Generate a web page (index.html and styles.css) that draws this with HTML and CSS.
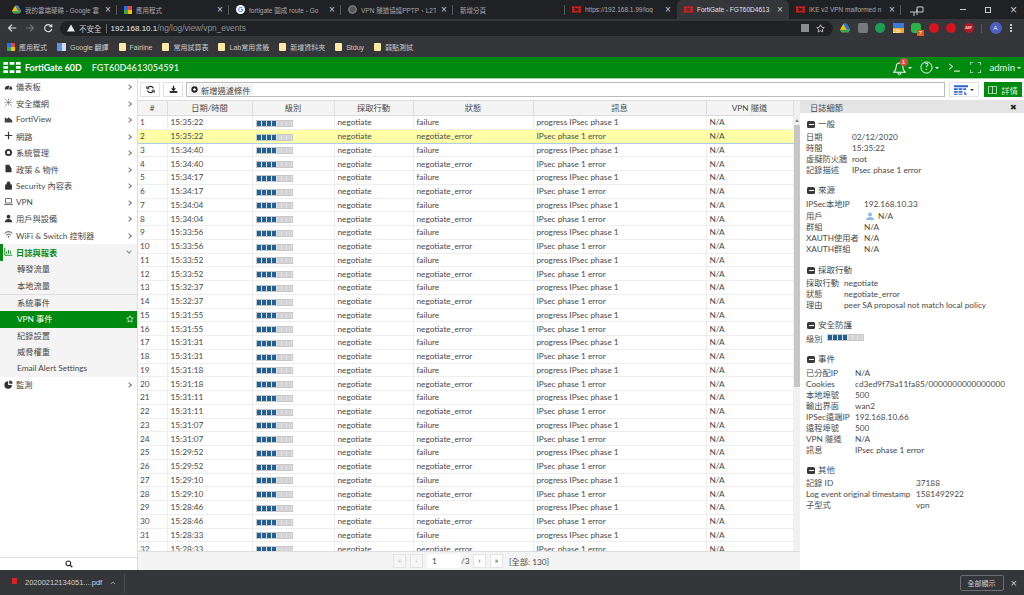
FILE: index.html
```html
<!DOCTYPE html>
<html lang="zh-Hant">
<head>
<meta charset="utf-8">
<title>FortiGate - FGT60D4613054591</title>
<link rel="stylesheet" href="styles.css">
</head>
<body>
<div class="app">
  <div class="tabs">
    <div class="tab sp"><svg class="fav" viewBox="0 0 12 12"><path d="M4 1h4l4 7-2 3H2L0 8z" fill="#fbbc04"/><path d="M4 1h4l4 7H8z" fill="#1a73e8" opacity=".8"/><path d="M0 8l2 3h8l2-3z" fill="#34a853"/></svg><span class="tt">我的雲端硬碟 - Google 雲</span><span class="x">×</span></div>
    <div class="tab sp"><span class="grid-ico"></span><span class="tt">應用程式</span><span class="x">×</span></div>
    <div class="tab sp"><span class="g-ico">G</span><span class="tt">fortigate 圖成 route - Go</span><span class="x">×</span></div>
    <div class="tab sp"><svg class="fav" viewBox="0 0 12 12"><circle cx="6" cy="6" r="5" fill="#55575a" stroke="#8a8c90" stroke-width="1.600"/></svg><span class="tt">VPN 隧道協議PPTP、L2T</span><span class="x">×</span></div>
    <div class="tab sp"><span class="tt">新增分頁</span></div>
    <div class="tab"><svg class="fav ft" viewBox="0 0 22 14"><path d="M0 0h6v3.500H0zM8 0h6v3.500H8zM16 0h6v3.500h-6zM0 5.200h6v3.500H0zM16 5.200h6v3.500h-6zM0 10.500h6V14H0zM8 10.500h6V14H8zM16 10.500h6V14h-6z"/></svg><span class="tt">https://192.168.1.99/log</span><span class="x">×</span></div>
    <div class="tab active"><svg class="fav ft" viewBox="0 0 22 14"><path d="M0 0h6v3.500H0zM8 0h6v3.500H8zM16 0h6v3.500h-6zM0 5.200h6v3.500H0zM16 5.200h6v3.500h-6zM0 10.500h6V14H0zM8 10.500h6V14H8zM16 10.500h6V14h-6z"/></svg><span class="tt">FortiGate - FGT60D4613</span><span class="x">×</span></div>
    <div class="tab sp"><svg class="fav ft" viewBox="0 0 22 14"><path d="M0 0h6v3.500H0zM8 0h6v3.500H8zM16 0h6v3.500h-6zM0 5.200h6v3.500H0zM16 5.200h6v3.500h-6zM0 10.500h6V14H0zM8 10.500h6V14H8zM16 10.500h6V14h-6z"/></svg><span class="tt">IKE v2 VPN malformed n</span><span class="x">×</span></div>
    <svg class="pin" viewBox="0 0 14 12"><path d="M0 8h7M4 8v4M7 5v6M7 3h6v5H7z" fill="none" stroke="#c8cacd" stroke-width="1"/></svg>
    <div class="win"><span class="w-min"></span><span class="w-max"></span><span class="w-x">×</span></div>
  </div>
  <div class="toolbar">
    <svg class="nav" viewBox="0 0 12 12"><path d="M11 6H2M6 2L2 6l4 4" fill="none" stroke="#dfe1e4" stroke-width="1.400"/></svg>
    <svg class="nav" viewBox="0 0 12 12"><path d="M1 6h9M6 2l4 4-4 4" fill="none" stroke="#75777b" stroke-width="1.400"/></svg>
    <svg class="nav" viewBox="0 0 12 12"><path d="M10 4a4.300 4.300 0 1 0 .5 3M10.500 1.500V4.500H7.500" fill="none" stroke="#dfe1e4" stroke-width="1.400"/></svg>
    <div class="omni">
      <svg class="warn" viewBox="0 0 10 10"><path d="M5 .5L10 9.500H0z" fill="#e8eaed"/></svg>
      <span class="insecure">不安全</span><span class="sep"></span>
      <span class="host">192.168.10.1</span><span class="path">/ng/log/view/vpn_events</span>
      <span class="omni-r"><span class="trans"></span><svg class="star" viewBox="0 0 12 12"><path d="M6 1l1.500 3.300 3.500.4-2.600 2.400.7 3.500L6 8.900l-3.100 1.700.7-3.500L1 4.700l3.500-.4z" fill="none" stroke="#dfe1e4"/></svg></span>
    </div>
    <div class="exts">
      <svg class="ext" viewBox="0 0 12 12"><path d="M4 1h4l4 7-2 3H2L0 8z" fill="#fbbc04"/><path d="M4 1h4l4 7H8z" fill="#1a73e8"/><path d="M0 8l2 3h8l2-3z" fill="#34a853"/></svg>
      <span class="ext e-gray"></span>
      <span class="ext e-green"></span>
      <span class="ext e-cal">18h</span>
      <span class="ext e-line"><span class="e-badge">7</span></span>
      <span class="ext e-red"></span>
      <span class="ext e-red"></span>
      <span class="ext e-abp">ABP</span>
      <span class="ext-sep"></span>
      <span class="avatar">A</span>
      <span class="kebab"></span>
    </div>
  </div>
  <div class="bookmarks">
    <span class="bm"><span class="grid-ico"></span>應用程式</span>
    <span class="bm"><span class="bm-tr"></span>Google 翻譯</span>
    <span class="bm"><span class="folder"></span>Fairline</span>
    <span class="bm"><span class="folder"></span>常用試算表</span>
    <span class="bm"><span class="folder"></span>Lab常用書籤</span>
    <span class="bm"><span class="folder"></span>新增資料夾</span>
    <span class="bm"><span class="folder"></span>Stduy</span>
    <span class="bm"><span class="folder"></span>弱點測試</span>
  </div>
  <header class="fg-head">
    <svg class="fg-logo" viewBox="0 0 22 14"><path d="M0 0h6v3.500H0zM8 0h6v3.500H8zM16 0h6v3.500h-6zM0 5.200h6v3.500H0zM16 5.200h6v3.500h-6zM0 10.500h6V14H0zM8 10.500h6V14H8zM16 10.500h6V14h-6z" fill="#fff"/></svg>
    <span class="fg-name">FortiGate 60D</span>
    <span class="fg-serial">FGT60D4613054591</span>
    <div class="fg-right">
      <span class="hd-bell"><svg viewBox="0 0 14 15" class="hd-ico"><path d="M7 2a3.500 3.500 0 0 0-3.500 3.500C3.500 9 2 11 1 12h12c-1-1-2.500-3-2.500-6.500A3.500 3.500 0 0 0 7 2zM5.500 13a1.500 1.500 0 0 0 3 0" fill="none" stroke="#fff" stroke-width="1.100"/></svg><span class="badge">1</span></span><span class="caret"></span>
      <svg viewBox="0 0 14 14" class="hd-help"><circle cx="7" cy="7" r="6" fill="none" stroke="#fff" stroke-width="1"/><text x="7" y="10.200" text-anchor="middle" font-size="9.500" fill="#fff" font-family="Lato">?</text></svg><span class="caret"></span>
      <svg viewBox="0 0 12 10" class="hd-term"><path d="M0 1l4 3-4 3M5.500 9H12" fill="none" stroke="#fff" stroke-width="1.100"/></svg>
      <svg viewBox="0 0 12 12" class="hd-full"><path d="M0 3.500V0h3.500M8.500 0H12v3.500M12 8.500V12H8.500M3.500 12H0V8.500" fill="none" stroke="#fff" stroke-width="1.200"/></svg>
      <span class="hd-admin">admin</span><span class="caret"></span>
    </div>
  </header>
  <main class="body">
    <nav class="side">
      <div class="side-scroll">
        <a class="nv"><svg class="ni" viewBox="0 0 12 12"><path d="M1 10a5 5 0 1 1 10 0z" fill="#333"/><path d="M6 10L8 5" stroke="#fff"/></svg><span>儀表板</span><i class="chev"></i></a>
        <a class="nv"><svg class="ni" viewBox="0 0 12 12"><path d="M1 1l10 10M11 1L1 11M6 1v10M1 6h10" stroke="#555" stroke-dasharray="1.500 1"/></svg><span>安全織網</span><i class="chev"></i></a>
        <a class="nv"><svg class="ni" viewBox="0 0 12 12"><path d="M1 10V3l3 2 2-2 5 4v3z" fill="#444"/></svg><span>FortiView</span><i class="chev"></i></a>
        <a class="nv"><svg class="ni" viewBox="0 0 12 12"><path d="M6 1v10M1 6h10" stroke="#333" stroke-width="1.600"/></svg><span>網路</span><i class="chev"></i></a>
        <a class="nv"><svg class="ni" viewBox="0 0 12 12"><circle cx="6" cy="6" r="3.500" fill="none" stroke="#333" stroke-width="2.500"/></svg><span>系統管理</span><i class="chev"></i></a>
        <a class="nv"><svg class="ni" viewBox="0 0 12 12"><path d="M2 1h5l3 5v5H2z" fill="#333"/></svg><span>政策 &amp; 物件</span><i class="chev"></i></a>
        <a class="nv"><svg class="ni" viewBox="0 0 12 12"><path d="M2 5h8v6H2zM4 5V3a2 2 0 0 1 4 0v2" fill="#333" stroke="#333"/></svg><span>Security 內容表</span><i class="chev"></i></a>
        <a class="nv"><svg class="ni" viewBox="0 0 12 12"><path d="M2 2h8v6H2zM0 10h12" fill="none" stroke="#444"/></svg><span>VPN</span><i class="chev"></i></a>
        <a class="nv"><svg class="ni" viewBox="0 0 12 12"><circle cx="6" cy="3.500" r="2.500" fill="#333"/><path d="M1 11c0-6 10-6 10 0z" fill="#333"/></svg><span>用戶與設備</span><i class="chev"></i></a>
        <a class="nv"><svg class="ni" viewBox="0 0 12 12"><path d="M1 4.500c3-3 7-3 10 0M3 7c2-2 4-2 6 0" fill="none" stroke="#333" stroke-width="1.300"/><circle cx="6" cy="9" r="1" fill="#333"/></svg><span>WiFi &amp; Switch 控制器</span><i class="chev"></i></a>
        <a class="nv open"><svg class="ni" viewBox="0 0 12 12"><path d="M1 1v10h10M3.500 9V6M6 9V4M8.500 9V5" fill="none" stroke="#0a8a14" stroke-width="1.200"/></svg><span>日誌與報表</span><i class="chev down"></i></a>
        <div class="subs">
          <a class="sb">轉發流量</a>
          <a class="sb div">本地流量</a>
          <a class="sb">系統事件</a>
          <a class="sb on">VPN 事件<svg class="sb-star" viewBox="0 0 12 12"><path d="M6 1l1.500 3.300 3.500.4-2.600 2.400.7 3.500L6 8.900l-3.100 1.700.7-3.500L1 4.700l3.500-.4z" fill="none" stroke="#fff"/></svg></a>
          <a class="sb">紀錄設置</a>
          <a class="sb">威脅權重</a>
          <a class="sb">Email Alert Settings</a>
        </div>
        <a class="nv"><svg class="ni" viewBox="0 0 12 12"><path d="M5.500 1.500a5 5 0 1 0 5 5h-5z" fill="#333"/><path d="M7 .5a4.500 4.500 0 0 1 4.500 4.500H7z" fill="#333"/></svg><span>監測</span><i class="chev"></i></a>
      </div>
      <div class="side-search"><svg viewBox="0 0 12 12" class="s-ico"><circle cx="5" cy="5" r="3.500" fill="none" stroke="#333" stroke-width="1.800"/><path d="M7.500 7.500L11 11" stroke="#333" stroke-width="2"/></svg></div>
    </nav>
    <section class="content">
      <div class="tools">
        <button class="tbtn t-ref"><svg viewBox="0 0 12 12"><path d="M10 4.500A4.200 4.200 0 0 0 2.300 4M2 7.500A4.200 4.200 0 0 0 9.700 8" fill="none" stroke="#222" stroke-width="1.700"/><path d="M1 1.500v3.500h3.500M11 10.500V7H7.500" fill="none" stroke="#222" stroke-width="1.200"/></svg></button>
        <button class="tbtn t-dl"><svg viewBox="0 0 12 12"><path d="M6 1v5M3.500 4.500L6 7l2.500-2.500" fill="none" stroke="#222" stroke-width="1.800"/><path d="M1 8h10v2.500H1z" fill="#222"/></svg></button>
        <div class="filter"><span class="addf"><svg viewBox="0 0 10 10"><circle cx="5" cy="5" r="4.500" fill="#222"/><circle cx="5" cy="5" r="1.800" fill="#fff"/></svg>新增過濾條件</span></div>
        <button class="tbtn t-col"><svg class="col-ico" viewBox="0 0 15 10"><path d="M0 0h15v2H0zM0 3h4v2H0zM5 3h4v2H5zM10 3h3v2h-3zM0 6h4v2H0zM5 6h4v2H5zM0 9h4v1H0zM5 9h4v1H5zM11 6l3 4h-3z" fill="#2f62d4"/></svg><span class="caret dark"></span></button>
        <button class="tbtn t-det"><svg viewBox="0 0 11 10"><path d="M.5.500h10v9H.5zM5.500.500v9" fill="none" stroke="#d5ecd6"/></svg>詳情</button>
      </div>
      <div class="split">
        <div class="grid-wrap">
          <div class="grid-main">
          <table class="log">
            <colgroup><col class="c0"><col class="c1"><col class="c2"><col class="c3"><col class="c4"><col class="c5"><col class="c6"></colgroup>
            <thead><tr><th>#</th><th>日期/時間</th><th>級別</th><th>採取行動</th><th>狀態</th><th>訊息</th><th>VPN 隧道</th></tr></thead>
            <tbody>
<tr><td>1</td><td>15:35:22</td><td><span class="lv"></span></td><td>negotiate</td><td>failure</td><td>progress IPsec phase 1</td><td>N/A</td></tr>
<tr class="sel"><td>2</td><td>15:35:22</td><td><span class="lv"></span></td><td>negotiate</td><td>negotiate_error</td><td>IPsec phase 1 error</td><td>N/A</td></tr>
<tr><td>3</td><td>15:34:40</td><td><span class="lv"></span></td><td>negotiate</td><td>failure</td><td>progress IPsec phase 1</td><td>N/A</td></tr>
<tr><td>4</td><td>15:34:40</td><td><span class="lv"></span></td><td>negotiate</td><td>negotiate_error</td><td>IPsec phase 1 error</td><td>N/A</td></tr>
<tr><td>5</td><td>15:34:17</td><td><span class="lv"></span></td><td>negotiate</td><td>failure</td><td>progress IPsec phase 1</td><td>N/A</td></tr>
<tr><td>6</td><td>15:34:17</td><td><span class="lv"></span></td><td>negotiate</td><td>negotiate_error</td><td>IPsec phase 1 error</td><td>N/A</td></tr>
<tr><td>7</td><td>15:34:04</td><td><span class="lv"></span></td><td>negotiate</td><td>failure</td><td>progress IPsec phase 1</td><td>N/A</td></tr>
<tr><td>8</td><td>15:34:04</td><td><span class="lv"></span></td><td>negotiate</td><td>negotiate_error</td><td>IPsec phase 1 error</td><td>N/A</td></tr>
<tr><td>9</td><td>15:33:56</td><td><span class="lv"></span></td><td>negotiate</td><td>failure</td><td>progress IPsec phase 1</td><td>N/A</td></tr>
<tr><td>10</td><td>15:33:56</td><td><span class="lv"></span></td><td>negotiate</td><td>negotiate_error</td><td>IPsec phase 1 error</td><td>N/A</td></tr>
<tr><td>11</td><td>15:33:52</td><td><span class="lv"></span></td><td>negotiate</td><td>failure</td><td>progress IPsec phase 1</td><td>N/A</td></tr>
<tr><td>12</td><td>15:33:52</td><td><span class="lv"></span></td><td>negotiate</td><td>negotiate_error</td><td>IPsec phase 1 error</td><td>N/A</td></tr>
<tr><td>13</td><td>15:32:37</td><td><span class="lv"></span></td><td>negotiate</td><td>failure</td><td>progress IPsec phase 1</td><td>N/A</td></tr>
<tr><td>14</td><td>15:32:37</td><td><span class="lv"></span></td><td>negotiate</td><td>negotiate_error</td><td>IPsec phase 1 error</td><td>N/A</td></tr>
<tr><td>15</td><td>15:31:55</td><td><span class="lv"></span></td><td>negotiate</td><td>failure</td><td>progress IPsec phase 1</td><td>N/A</td></tr>
<tr><td>16</td><td>15:31:55</td><td><span class="lv"></span></td><td>negotiate</td><td>negotiate_error</td><td>IPsec phase 1 error</td><td>N/A</td></tr>
<tr><td>17</td><td>15:31:31</td><td><span class="lv"></span></td><td>negotiate</td><td>failure</td><td>progress IPsec phase 1</td><td>N/A</td></tr>
<tr><td>18</td><td>15:31:31</td><td><span class="lv"></span></td><td>negotiate</td><td>negotiate_error</td><td>IPsec phase 1 error</td><td>N/A</td></tr>
<tr><td>19</td><td>15:31:18</td><td><span class="lv"></span></td><td>negotiate</td><td>failure</td><td>progress IPsec phase 1</td><td>N/A</td></tr>
<tr><td>20</td><td>15:31:18</td><td><span class="lv"></span></td><td>negotiate</td><td>negotiate_error</td><td>IPsec phase 1 error</td><td>N/A</td></tr>
<tr><td>21</td><td>15:31:11</td><td><span class="lv"></span></td><td>negotiate</td><td>failure</td><td>progress IPsec phase 1</td><td>N/A</td></tr>
<tr><td>22</td><td>15:31:11</td><td><span class="lv"></span></td><td>negotiate</td><td>negotiate_error</td><td>IPsec phase 1 error</td><td>N/A</td></tr>
<tr><td>23</td><td>15:31:07</td><td><span class="lv"></span></td><td>negotiate</td><td>failure</td><td>progress IPsec phase 1</td><td>N/A</td></tr>
<tr><td>24</td><td>15:31:07</td><td><span class="lv"></span></td><td>negotiate</td><td>negotiate_error</td><td>IPsec phase 1 error</td><td>N/A</td></tr>
<tr><td>25</td><td>15:29:52</td><td><span class="lv"></span></td><td>negotiate</td><td>failure</td><td>progress IPsec phase 1</td><td>N/A</td></tr>
<tr><td>26</td><td>15:29:52</td><td><span class="lv"></span></td><td>negotiate</td><td>negotiate_error</td><td>IPsec phase 1 error</td><td>N/A</td></tr>
<tr><td>27</td><td>15:29:10</td><td><span class="lv"></span></td><td>negotiate</td><td>failure</td><td>progress IPsec phase 1</td><td>N/A</td></tr>
<tr><td>28</td><td>15:29:10</td><td><span class="lv"></span></td><td>negotiate</td><td>negotiate_error</td><td>IPsec phase 1 error</td><td>N/A</td></tr>
<tr><td>29</td><td>15:28:46</td><td><span class="lv"></span></td><td>negotiate</td><td>failure</td><td>progress IPsec phase 1</td><td>N/A</td></tr>
<tr><td>30</td><td>15:28:46</td><td><span class="lv"></span></td><td>negotiate</td><td>negotiate_error</td><td>IPsec phase 1 error</td><td>N/A</td></tr>
<tr><td>31</td><td>15:28:33</td><td><span class="lv"></span></td><td>negotiate</td><td>failure</td><td>progress IPsec phase 1</td><td>N/A</td></tr>
<tr><td>32</td><td>15:28:33</td><td><span class="lv"></span></td><td>negotiate</td><td>negotiate_error</td><td>IPsec phase 1 error</td><td>N/A</td></tr>
            </tbody>
          </table>
          <div class="vbar"><div class="vup"></div><div class="vthumb"></div></div>
          </div>
          <div class="pager">
            <span class="pg dim">«</span><span class="pg dim">‹</span><span class="pg-in">1</span><span class="pg-of">/3</span><span class="pg">›</span><span class="pg">»</span><span class="pg-total">[全部: 130]</span>
          </div>
        </div>
        <aside class="detail">
          <div class="det-head"><span>日誌細節</span><span class="det-x">✖</span></div>
          <div class="det-body">
            <h4><i class="minus"></i>一般</h4>
            <dl class="kv k46"><dt>日期</dt><dd>02/12/2020</dd><dt>時間</dt><dd>15:35:22</dd><dt>虛擬防火牆</dt><dd>root</dd><dt>記錄描述</dt><dd>IPsec phase 1 error</dd></dl>
            <h4><i class="minus"></i>來源</h4>
            <dl class="kv k58"><dt>IPSec本地IP</dt><dd>192.168.10.33</dd><dt class="tall">用戶</dt><dd class="tall"><svg class="user" viewBox="0 0 10 10"><circle cx="5" cy="3" r="2.500" fill="#8fb4ea"/><path d="M0 10c0-5 10-5 10 0z" fill="#8fb4ea"/></svg>N/A</dd><dt>群組</dt><dd>N/A</dd><dt>XAUTH使用者</dt><dd>N/A</dd><dt>XAUTH群組</dt><dd>N/A</dd></dl>
            <h4><i class="minus"></i>採取行動</h4>
            <dl class="kv k38"><dt>採取行動</dt><dd>negotiate</dd><dt>狀態</dt><dd>negotiate_error</dd><dt>理由</dt><dd>peer SA proposal not match local policy</dd></dl>
            <h4><i class="minus"></i>安全防護</h4>
            <dl class="kv k22"><dt>級別</dt><dd><span class="lv"></span></dd></dl>
            <h4><i class="minus"></i>事件</h4>
            <dl class="kv k49"><dt>已分配IP</dt><dd>N/A</dd><dt>Cookies</dt><dd>cd3ed9f78a11fa85/0000000000000000</dd><dt>本地埠號</dt><dd>500</dd><dt>輸出界面</dt><dd>wan2</dd><dt>IPSec遠端IP</dt><dd>192.168.10.66</dd><dt>遠程埠號</dt><dd>500</dd><dt>VPN 隧道</dt><dd>N/A</dd><dt>訊息</dt><dd>IPsec phase 1 error</dd></dl>
            <h4><i class="minus"></i>其他</h4>
            <dl class="kv k110"><dt>記錄 ID</dt><dd>37188</dd><dt>Log event original timestamp</dt><dd>1581492922</dd><dt>子型式</dt><dd>vpn</dd></dl>
          </div>
        </aside>
      </div>
    </section>
  </main>
  <footer class="dl-bar">
    <span class="pdf"></span><span class="dl-name">20200212134051....pdf</span><svg class="dl-up" viewBox="0 0 8 5"><path d="M1 4l3-3 3 3" fill="none" stroke="#c8cacd"/></svg><span class="dl-sep"></span>
    <span class="dl-all">全部顯示</span><span class="dl-x">×</span>
  </footer>
</div>
</body>
</html>
```
FILE: styles.css
```css
* { box-sizing: border-box; }
html, body { margin: 0; padding: 0; }
body { width: 1024px; height: 595px; overflow: hidden; font-family: Lato, "Noto Sans CJK TC", sans-serif; font-size: 8.250px; color: #4a4a4a; background: #fff; }
.app { display: flex; flex-direction: column; height: 595px; }

/* browser tabs */
.tabs { height: 19px; background: #202124; display: flex; align-items: center; padding-left: 5px; color: #a6a8ab; font-size: 6.500px; font-family: "Liberation Sans", "Noto Sans CJK TC", sans-serif; flex: none; }
.tab { width: 112px; height: 19px; display: flex; align-items: center; gap: 4px; padding: 0 5px 0 7px; white-space: nowrap; overflow: hidden; flex: none; }
.tab.sp { background: linear-gradient(#55575a, #55575a) no-repeat 100% 50% / 1px 10px; }
.tab.active { background: #35363a; border-radius: 5px 5px 0 0; color: #e3e4e6; }
.tt { flex: 1; overflow: hidden; }
.fav { width: 9px; height: 9px; flex: none; }
.fav.ft { height: 7px; }
.ft path { fill: #e0201c; stroke: #e0201c; stroke-width: 1.200; }
.x { width: 8px; font-size: 10px; color: #c8cacd; line-height: 1; text-align: center; flex: none; }
.grid-ico { width: 8px; height: 8px; flex: none; background: conic-gradient(#e8453c 25%, #fbbc04 25% 50%, #34a853 50% 75%, #1a73e8 75%); }
.g-ico { width: 9px; height: 9px; border-radius: 50%; background: #fff; color: #4285f4; font-size: 7px; line-height: 9px; text-align: center; font-weight: 700; flex: none; }
.pin { width: 14px; height: 12px; margin-left: 9px; flex: none; }
.win { margin-left: auto; display: flex; align-items: center; gap: 19px; padding-right: 7px; }
.w-min { width: 6px; height: 1px; background: #c8cacd; }
.w-max { width: 6px; height: 6px; border: 1px solid #c8cacd; }
.w-x { font-size: 12px; color: #c8cacd; line-height: 1; }

/* toolbar */
.toolbar { height: 18px; background: #35363a; display: flex; align-items: center; padding-left: 7px; flex: none; }
.nav { width: 10px; height: 10px; margin-right: 8px; flex: none; }
.omni { width: 773px; margin-left: -1px; height: 15px; border-radius: 8px; background: #202124; display: flex; align-items: center; padding: 0 0 0 7px; font-size: 7.500px; font-family: "Liberation Sans", "Noto Sans CJK TC", sans-serif; flex: none; }
.warn { width: 8px; height: 8px; margin-right: 4px; }
.insecure { color: #c8cacd; }
.sep { width: 1px; height: 9px; background: #6b6d70; margin: 0 4px; }
.host { color: #e8eaed; font-size: 8px; }
.path { color: #8f9195; font-size: 8.300px; }
.omni-r { margin-left: auto; display: flex; align-items: center; gap: 7px; padding-right: 8px; }
.trans { width: 8px; height: 8px; background: #8a8c90; }
.star { width: 9px; height: 9px; }
.exts { flex: 1; display: flex; align-items: center; gap: 7.500px; padding-left: 7px; }
.ext { width: 10px; height: 10px; flex: none; }
.e-gray { background: #77797c; border-radius: 2px; }
.e-green { background: #1e9e54; border-radius: 50% 40% 50% 50%; }
.e-cal { background: linear-gradient(#3b78d8 55%, #f6a61e 55%); color: #fff; font-size: 5px; line-height: 16px; width: 11px; overflow: hidden; }
.e-line { background: #2fb14a; border-radius: 3px; position: relative; }
.e-badge { position: absolute; right: -3px; bottom: -3px; width: 7px; height: 6px; background: #e2571c; color: #fff; font-size: 5px; line-height: 6px; text-align: center; }
.e-red { background: #d4141f; border-radius: 50%; }
.e-abp { background: #b01c22; border-radius: 50%; color: #fff; font-size: 3.500px; line-height: 10px; text-align: center; }
.ext-sep { width: 1px; height: 9px; background: #55575a; }
.avatar { width: 12px; height: 12px; border-radius: 50%; background: #4a5fc0; color: #e8eaed; font-size: 6.500px; line-height: 12px; text-align: center; }
.kebab { width: 2px; height: 8px; margin-left: 1px; background: radial-gradient(circle at 1px 1px, #c8cacd 1px, transparent 1px) 0 0 / 2px 3px; }

/* bookmarks */
.bookmarks { height: 20px; background: #35363a; display: flex; align-items: center; padding-left: 7px; color: #c9cbce; font-size: 7px; font-family: "Liberation Sans", "Noto Sans CJK TC", sans-serif; gap: 10px; flex: none; }
.bm { display: flex; align-items: center; gap: 4px; white-space: nowrap; }
.folder { width: 7px; height: 8px; background: #fbe8a3; border-radius: 1px; flex: none; }
.bm-tr { width: 9px; height: 8px; background: linear-gradient(90deg, #5a95ea 55%, #d8dce2 55%); flex: none; }

/* fortigate header */
.fg-head { height: 22px; background: #008a10; border-bottom: 1px solid #a8cfa9; color: #fff; display: flex; align-items: center; padding-left: 3px; flex: none; }
.fg-logo { width: 18px; height: 11px; flex: none; margin-right: 4px; }
.fg-name { font-size: 8.900px; font-weight: 700; margin-right: 10px; white-space: nowrap; }
.fg-serial { font-size: 9.100px; color: #cfe9d0; font-weight: 700; }
.fg-right { margin-left: auto; display: flex; align-items: center; padding-right: 3px; }
.hd-bell { position: relative; width: 13px; height: 14px; display: block; }
.hd-ico { width: 13px; height: 14px; display: block; }
.badge { position: absolute; top: -3px; left: 7px; width: 8px; height: 8px; border-radius: 50%; background: #e04848; font-size: 6px; line-height: 8px; text-align: center; color: #fff; }
.caret { width: 0; height: 0; border: 2px solid transparent; border-top-color: #fff; border-bottom: 0; margin-left: 2px; }
.caret.dark { border-top-color: #333; margin-left: 1px; }
.hd-help { width: 13px; height: 13px; margin-left: 8px; }
.hd-term { width: 11px; height: 9px; margin-left: 10px; }
.hd-full { width: 11px; height: 11px; margin-left: 10px; }
.hd-admin { margin-left: 9px; font-size: 9.500px; color: #eaf6ea; }

/* body */
.body { flex: 1; display: flex; min-height: 0; background: #fff; }
.side { width: 138px; flex: none; display: flex; flex-direction: column; border-right: 1px solid #ddd; }
.side-scroll { flex: 1; overflow: hidden; }
.nv { height: 16.500px; display: flex; align-items: center; padding: 0 0 2px 4px; color: #4a4a4a; position: relative; white-space: nowrap; }
.ni { width: 9px; height: 9px; margin-right: 3px; flex: none; }
.chev { position: absolute; right: 6px; top: 6px; width: 4px; height: 4px; border-top: 1px solid #777; border-right: 1px solid #777; transform: rotate(45deg); }
.chev.down { transform: rotate(135deg); border-color: #6aa66f; top: 5px; }
.nv.open { background: #f4f4f4; color: #0a8a14; font-weight: 700; box-shadow: inset 3px 0 0 #0a8a14; height: 17px; }
.subs { background: #f4f4f4; }
.sb { display: flex; align-items: center; height: 16.500px; padding: 0 0 2px 17px; color: #4a4a4a; position: relative; }
.sb.div { border-bottom: 1px solid #ddd; height: 17px; }
.sb.on { background: #008a10; color: #fff; }
.sb-star { width: 8px; height: 8px; position: absolute; right: 3px; top: 4px; }
.side-search { height: 13px; border-top: 1px solid #ddd; display: flex; align-items: center; justify-content: center; flex: none; }
.s-ico { width: 8px; height: 8px; }

.content { flex: 1; display: flex; flex-direction: column; min-width: 0; }
.tools { height: 21px; display: flex; align-items: center; padding: 0 2px; flex: none; }
.tbtn { height: 15px; padding: 0; border: 1px solid #e2e2e2; background: #fff; display: flex; align-items: center; justify-content: center; flex: none; font-family: inherit; }
.tbtn svg { width: 9px; height: 9px; }
.t-ref { width: 20px; margin-right: 3px; }
.t-dl { width: 20px; margin-right: 3px; }
.filter { flex: 1; height: 15px; border: 1px solid #bbb; background: #fff; display: flex; align-items: center; }
.addf { height: 11px; background: #f1f1f1; display: flex; align-items: center; gap: 3px; padding: 0 2px; margin-left: 2px; font-size: 8.250px; color: #4a4a4a; white-space: nowrap; }
.addf svg { width: 7px; height: 7px; }
.t-col { width: 30px; margin-left: 4px; gap: 1px; }
.tbtn .col-ico { width: 14px; height: 10px; }
.t-det { width: 38px; margin-left: 5px; background: #008a10; border: 1px solid #008a10; color: #d5ecd6; gap: 4px; font-size: 8.250px; }
.t-det svg { width: 9px; height: 8px; }

.split { flex: 1; display: flex; min-height: 0; }
.grid-wrap { width: 662px; flex: none; display: flex; flex-direction: column; border-top: 1px solid #ddd; }
.grid-main { flex: 1; min-height: 0; overflow: hidden; display: flex; align-items: flex-start; }
.log { width: 655px; flex: none; border-collapse: collapse; table-layout: fixed; color: #4a4a4a; }
.c0 { width: 29px; } .c1 { width: 85px; } .c2 { width: 82px; } .c3 { width: 79px; } .c4 { width: 120px; } .c5 { width: 173px; } .c6 { width: 87px; }
.log th { height: 14.500px; padding: 0; font-weight: 400; background: #f4f4f4; border: 1px solid #ddd; border-width: 0 1px 1px 0; text-align: center; line-height: 13px; }
.log td { height: 13.750px; padding: 0 0 0 3px; border-right: 1px solid #eee; border-bottom: 1px solid #eee; white-space: nowrap; line-height: 12px; overflow: hidden; }
.log tbody td:first-child { padding-left: 2px; }
.log tr.sel td { background: #ffffa8; border-top: 1px solid #aecbe8; border-bottom: 1px solid #aecbe8; border-right-color: #ffffa8; }
.lv { display: inline-block; vertical-align: middle; width: 37px; height: 7px; border: 1px solid #c8c8c8; background: repeating-linear-gradient(90deg, transparent 0 4px, #dfe3e7 4px 5px), linear-gradient(90deg, #236096 20px, #d4d4d4 20px); }

.vbar { flex: 1; align-self: stretch; background: #f1f1f1; display: flex; flex-direction: column; }
.vup { height: 24px; flex: none; display: flex; align-items: flex-end; justify-content: center; padding-bottom: 3px; }
.vup::before { content: ""; border: 2.500px solid transparent; border-bottom: 3px solid #888; border-top: 0; }
.vthumb { height: 262px; background: #c6c6c6; flex: none; }

.pager { height: 19px; flex: none; background: #f4f4f4; border-top: 1px solid #ddd; display: flex; align-items: center; padding-left: 255px; }
.pg { width: 13px; height: 14px; margin-right: 4px; background: #fff; border: 1px solid #e4e4e4; text-align: center; line-height: 11px; color: #333; flex: none; }
.pg.dim { color: #bbb; background: #f6f6f6; }
.pg-in { width: 34px; height: 14px; background: #fff; line-height: 14px; padding-left: 5px; flex: none; }
.pg-of { width: 12px; flex: none; }
.pg-total { margin-left: 2px; white-space: nowrap; }

.detail { flex: 1; min-width: 0; background: #fff; overflow: hidden; }
.det-head { height: 13px; background: #e4e4e4; display: flex; justify-content: space-between; align-items: center; padding: 0 7px 0 10px; color: #4a4a4a; }
.det-x { font-size: 8px; color: #222; }
.det-body { padding: 4.500px 0 0 6px; }
h4 { margin: 0 0 1.400px; font-weight: 400; font-size: 8.500px; color: #4a4a4a; height: 13px; line-height: 13px; display: flex; align-items: center; padding-left: 1px; }
.minus { width: 8px; height: 7px; border-radius: 1.500px; background: #3a3a3a; margin-right: 3px; position: relative; flex: none; }
.minus::after { content: ""; position: absolute; left: 1.500px; right: 1.500px; top: 3px; height: 1px; background: #fff; }
.kv { margin: 0 0 8.400px; display: grid; line-height: 11px; }
.kv dt { grid-column: 1; white-space: nowrap; }
.kv dd { grid-column: 2; margin: 0; white-space: nowrap; }
.kv .tall { line-height: 12.600px; }
.k46 { grid-template-columns: 46px 1fr; }
.k58 { grid-template-columns: 58px 1fr; }
.k38 { grid-template-columns: 38px 1fr; }
.k22 { grid-template-columns: 21px 1fr; }
.k49 { grid-template-columns: 49px 1fr; }
.k110 { grid-template-columns: 110px 1fr; }
.user { width: 8px; height: 8px; margin: 0 4px 0 2px; vertical-align: -1px; }
.det-body .lv { vertical-align: 1px; }

/* download bar */
.dl-bar { height: 25px; background: #35363a; display: flex; align-items: center; flex: none; padding-left: 12px; color: #d0d2d5; font-size: 7.500px; font-family: "Liberation Sans", sans-serif; }
.pdf { width: 5px; height: 6px; background: #d8231f; margin-right: 8px; margin-top: -3px; }
.dl-name { white-space: nowrap; }
.dl-up { width: 6px; height: 4px; margin-left: 8px; }
.dl-sep { width: 1px; height: 20px; background: #4a4c50; margin-left: 8px; }
.dl-all { margin-left: auto; width: 44px; height: 16px; border: 1px solid #6b6d70; border-radius: 2px; text-align: center; line-height: 14px; font-family: "Noto Sans CJK TC", sans-serif; font-size: 7px; }
.dl-x { margin: 0 7px; font-size: 11px; color: #c8cacd; }
```
